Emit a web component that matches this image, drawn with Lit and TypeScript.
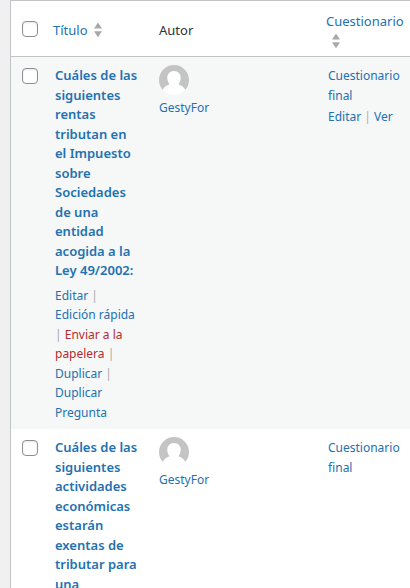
import { LitElement, html, css, svg, nothing } from "lit";
import { customElement, property } from "lit/decorators.js";

interface Action {
  label: string;
  danger?: boolean;
}

interface Question {
  title: string;
  actions: Action[];
  author: string;
  quiz: string;
  quizActions: Action[];
}

const questions: Question[] = [
  {
    title:
      "Cuáles de las siguientes rentas tributan en el Impuesto sobre Sociedades de una entidad acogida a la Ley 49/2002:",
    actions: [
      { label: "Editar" },
      { label: "Edición rápida" },
      { label: "Enviar a la papelera", danger: true },
      { label: "Duplicar" },
      { label: "Duplicar Pregunta" },
    ],
    author: "GestyFor",
    quiz: "Cuestionario final",
    quizActions: [{ label: "Editar" }, { label: "Ver" }],
  },
  {
    title: "Cuáles de las siguientes actividades económicas estarán exentas de tributar para una",
    actions: [],
    author: "GestyFor",
    quiz: "Cuestionario final",
    quizActions: [],
  },
];

const sortIcon = html`<svg class="sort" viewBox="0 0 10 16" width="10" height="16" aria-hidden="true">
  ${svg`<path d="M5 0.5 9 6.500H1zM5 15.200 1 9.200h8z" />`}
</svg>`;

const avatar = html`<svg class="avatar" viewBox="0 0 30 30" width="30" height="30" aria-hidden="true">
  ${svg`<circle cx="15" cy="15" r="15" fill="#c4c4c4" />
  <path fill="#fff" d="M15 6c4 0 6.700 2.800 6.700 6.800 0 2.600-.9 4.900-2.300 6.400 3.200 1 5.900 3.200 7 6.100A15 15 0 0 1 15 30 15 15 0 0 1 3.600 25.300c1.100-2.900 3.800-5.100 7-6.100-1.400-1.500-2.300-3.800-2.300-6.400C8.300 8.800 11 6 15 6z" />`}
</svg>`;

@customElement("row-actions")
export class RowActions extends LitElement {
  @property({ attribute: false }) actions: Action[] = [];

  static styles = css`
    :host {
      display: block;
      color: #a7aaad;
    }
    .link {
      color: #2271b1;
      text-decoration: none;
    }
    .danger {
      color: #b32d2e;
    }
  `;

  render() {
    return this.actions.map(
      (a, i) => html`${i ? " | " : nothing}<a class="link ${a.danger ? "danger" : ""}" href="#">${a.label}</a>`,
    );
  }
}

@customElement("app-root")
export class AppRoot extends LitElement {
  static styles = css`
    :host {
      display: block;
      padding-left: 10px;
      background: #f0f0f1;
      color: #2c3338;
      font-family: "Noto Sans", "Open Sans", sans-serif;
      font-size: 12px;
    }
    .list {
      min-height: 100vh;
      box-sizing: border-box;
      background: #fff;
      border: 1px solid #c3c4c7;
      border-width: 1px 0 0 1px;
    }
    .table {
      width: 100%;
      table-layout: fixed;
      border-collapse: separate;
      border-spacing: 0;
      font-size: 13px;
      line-height: 1.5em;
    }
    .col-check {
      width: 34px;
    }
    .col-title {
      width: 104px;
    }
    .col-author {
      width: 169px;
    }
    .head {
      padding: 10px 0 7px 8px;
      border-bottom: 1px solid #c3c4c7;
      text-align: left;
      vertical-align: middle;
      font-weight: 400;
      line-height: 20px;
    }
    .head-author {
      padding-left: 10px;
    }
    .cell {
      padding: 9px 10px 7px;
      vertical-align: top;
      font-size: 12px;
    }
    .cell-author {
      padding-top: 8px;
    }
    .cell-quiz {
      padding-right: 0;
    }
    .check-cell {
      padding: 11px 0 0 11px;
      vertical-align: top;
    }
    .head-check {
      padding: 0 0 0 11px;
    }
    .striped {
      background: #f6f7f7;
    }
    .check {
      display: block;
      appearance: none;
      box-sizing: border-box;
      width: 16px;
      height: 16px;
      margin: 0;
      border: 1px solid #8c8f94;
      border-radius: 4px;
      background: #fff;
      box-shadow: inset 0 1px 2px rgba(0, 0, 0, 0.1);
    }
    .check:checked {
      background: #2271b1;
    }
    .link {
      color: #2271b1;
      text-decoration: none;
    }
    .sorter {
      display: flex;
      align-items: center;
      column-gap: 5px;
    }
    .sort {
      fill: #a7aaad;
    }
    .sorter-stacked {
      flex-direction: column;
      align-items: flex-start;
      row-gap: 2px;
    }
    .sorter-stacked .sort {
      margin-left: 5px;
    }
    .row-title {
      display: block;
      font-size: 13px;
      font-weight: 600;
    }
    .title-actions {
      padding-top: 5px;
    }
    .avatar {
      display: block;
      margin-bottom: 3px;
    }
    .quiz {
      display: block;
    }
    .quiz-actions {
      padding-top: 2px;
    }
  `;

  render() {
    return html`<main class="list">
      <table class="table">
        <colgroup>
          <col class="col-check" />
          <col class="col-title" />
          <col class="col-author" />
          <col />
        </colgroup>
        <thead>
          <tr>
            <td class="head head-check">
              <input class="check" type="checkbox" aria-label="Seleccionar todo" />
            </td>
            <th class="head" scope="col"><a class="link sorter" href="#">Título ${sortIcon}</a></th>
            <th class="head head-author" scope="col">Autor</th>
            <th class="head" scope="col">
              <a class="link sorter sorter-stacked" href="#">Cuestionario ${sortIcon}</a>
            </th>
          </tr>
        </thead>
        <tbody>
          ${questions.map(
            (q, i) => html`<tr class=${i % 2 ? "" : "striped"}>
              <td class="check-cell">
                <input class="check" type="checkbox" aria-label="Seleccionar ${q.title}" />
              </td>
              <td class="cell">
                <a class="link row-title" href="#">${q.title}</a>
                ${q.actions.length
                  ? html`<row-actions class="title-actions" .actions=${q.actions}></row-actions>`
                  : nothing}
              </td>
              <td class="cell cell-author">${avatar}<a class="link" href="#">${q.author}</a></td>
              <td class="cell cell-quiz">
                <a class="link quiz" href="#">${q.quiz}</a>
                ${q.quizActions.length
                  ? html`<row-actions class="quiz-actions" .actions=${q.quizActions}></row-actions>`
                  : nothing}
              </td>
            </tr>`,
          )}
        </tbody>
      </table>
    </main>`;
  }
}
